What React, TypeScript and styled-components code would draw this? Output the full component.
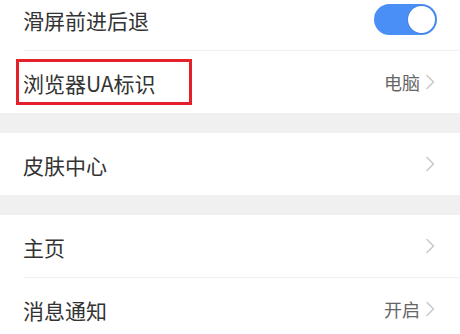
import React from "react";
import styled, { createGlobalStyle } from "styled-components";

const GlobalStyle = createGlobalStyle`
  html, body {
    margin: 0;
    padding: 0;
    background: #ffffff;
    overflow: hidden;
  }
  body {
    font-family: "Noto Sans CJK SC", "Noto Sans", sans-serif;
  }
`;

const Page = styled.div`
  width: 460px;
  height: 334px;
  overflow: hidden;
  background: #ffffff;
`;

const List = styled.div`
  margin-top: -12px;
  display: flex;
  flex-direction: column;
`;

const Row = styled.div<{ divider?: boolean }>`
  position: relative;
  height: 62px;
  display: flex;
  align-items: center;
  justify-content: space-between;
  padding: 0 25px 0 23px;
  background: #ffffff;

  ${(p) =>
    p.divider &&
    `
    &::after {
      content: "";
      position: absolute;
      left: 23px;
      right: 0;
      bottom: -1px;
      height: 1px;
      background: #f1f1f1;
    }
  `}
`;

const Spacer = styled.div`
  height: 1px;
`;

const Band = styled.div`
  height: 20px;
  background: #f0f0f0;
`;

const Label = styled.span`
  font-size: 21px;
  color: #333333;
  line-height: 1;
  margin-top: 2px;
`;

const Right = styled.div`
  display: flex;
  align-items: center;
  gap: 5px;
`;

const Value = styled.span`
  font-size: 18px;
  color: #666666;
  line-height: 1;
`;

const Toggle = styled.div<{ on?: boolean }>`
  width: 63px;
  height: 31px;
  border-radius: 16px;
  background: ${(p) => (p.on ? "#4a8ff6" : "#e5e5e5")};
  display: flex;
  align-items: center;
  justify-content: ${(p) => (p.on ? "flex-end" : "flex-start")};
  padding: 0 2px;
  box-sizing: border-box;
  margin-right: -2px;
`;

const Knob = styled.div`
  width: 27px;
  height: 27px;
  border-radius: 50%;
  background: #ffffff;
  box-shadow: 0 0 0 1px rgba(60, 110, 200, 0.35);
`;

const Highlight = styled.div`
  position: absolute;
  left: 16px;
  top: 8px;
  width: 176px;
  height: 46px;
  border: 3px solid #e4202b;
  box-sizing: border-box;
  pointer-events: none;
`;

function Chevron() {
  return (
    <svg width="10" height="16" viewBox="0 0 10 16">
      <polyline
        points="2,1.5 8.5,8 2,14.5"
        fill="none"
        stroke="#c8c8c8"
        strokeWidth="1.5"
        strokeLinecap="round"
        strokeLinejoin="round"
      />
    </svg>
  );
}

export default function App() {
  return (
    <Page>
      <GlobalStyle />
      <List>
        <Row divider>
          <Label>滑屏前进后退</Label>
          <Toggle on>
            <Knob />
          </Toggle>
        </Row>
        <Spacer />
        <Row>
          <Label>浏览器UA标识</Label>
          <Right>
            <Value>电脑</Value>
            <Chevron />
          </Right>
          <Highlight />
        </Row>
        <Band />
        <Row>
          <Label>皮肤中心</Label>
          <Right>
            <Chevron />
          </Right>
        </Row>
        <Band />
        <Row divider>
          <Label>主页</Label>
          <Right>
            <Chevron />
          </Right>
        </Row>
        <Spacer />
        <Row>
          <Label>消息通知</Label>
          <Right>
            <Value>开启</Value>
            <Chevron />
          </Right>
        </Row>
      </List>
    </Page>
  );
}
